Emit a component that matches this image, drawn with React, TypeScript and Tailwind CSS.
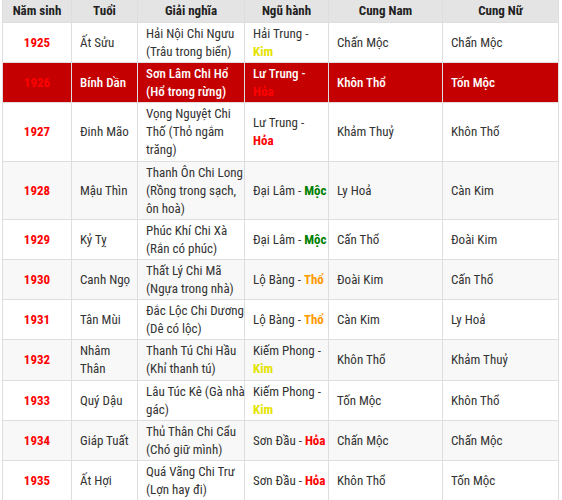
import React from "react";

type Elem = { name: string; color: string };
type Row = {
  year: string;
  tuoi: React.ReactNode;
  giai: string[];
  nh: string;
  el: Elem;
  nhBreak: boolean;
  nam: string;
  nu: string;
};

const KIM = { name: "Kim", color: "text-[#e3e300]" };
const HOA = { name: "Hỏa", color: "text-[#ff0000]" };
const MOC = { name: "Mộc", color: "text-[#008000]" };
const THO = { name: "Thổ", color: "text-[#ff9900]" };

const rows: Row[] = [
  { year: "1925", tuoi: "Ất Sửu", giai: ["Hải Nội Chi Ngưu", "(Trâu trong biển)"], nh: "Hải Trung -", el: KIM, nhBreak: true, nam: "Chấn Mộc", nu: "Chấn Mộc" },
  { year: "1926", tuoi: "Bính Dần", giai: ["Sơn Lâm Chi Hổ", "(Hổ trong rừng)"], nh: "Lư Trung -", el: HOA, nhBreak: true, nam: "Khôn Thổ", nu: "Tốn Mộc" },
  { year: "1927", tuoi: "Đinh Mão", giai: ["Vọng Nguyệt Chi", "Thố (Thỏ ngắm", "trăng)"], nh: "Lư Trung -", el: HOA, nhBreak: true, nam: "Khảm Thuỷ", nu: "Khôn Thổ" },
  { year: "1928", tuoi: "Mậu Thìn", giai: ["Thanh Ôn Chi Long", "(Rồng trong sạch,", "ôn hoà)"], nh: "Đại Lâm -", el: MOC, nhBreak: false, nam: "Ly Hoả", nu: "Càn Kim" },
  { year: "1929", tuoi: "Kỷ Tỵ", giai: ["Phúc Khí Chi Xà", "(Rắn có phúc)"], nh: "Đại Lâm -", el: MOC, nhBreak: false, nam: "Cấn Thổ", nu: "Đoài Kim" },
  { year: "1930", tuoi: "Canh Ngọ", giai: ["Thất Lý Chi Mã", "(Ngựa trong nhà)"], nh: "Lộ Bàng -", el: THO, nhBreak: false, nam: "Đoài Kim", nu: "Cấn Thổ" },
  { year: "1931", tuoi: "Tân Mùi", giai: ["Đắc Lộc Chi Dương", "(Dê có lộc)"], nh: "Lộ Bàng -", el: THO, nhBreak: false, nam: "Càn Kim", nu: "Ly Hoả" },
  { year: "1932", tuoi: <>Nhâm<br />Thân</>, giai: ["Thanh Tú Chi Hầu", "(Khỉ thanh tú)"], nh: "Kiếm Phong -", el: KIM, nhBreak: true, nam: "Khôn Thổ", nu: "Khảm Thuỷ" },
  { year: "1933", tuoi: "Quý Dậu", giai: ["Lâu Túc Kê (Gà nhà", "gác)"], nh: "Kiếm Phong -", el: KIM, nhBreak: true, nam: "Tốn Mộc", nu: "Khôn Thổ" },
  { year: "1934", tuoi: "Giáp Tuất", giai: ["Thủ Thân Chi Cẩu", "(Chó giữ mình)"], nh: "Sơn Đầu -", el: HOA, nhBreak: false, nam: "Chấn Mộc", nu: "Chấn Mộc" },
  { year: "1935", tuoi: "Ất Hợi", giai: ["Quá Vãng Chi Trư", "(Lợn hay đi)"], nh: "Sơn Đầu -", el: HOA, nhBreak: false, nam: "Khôn Thổ", nu: "Tốn Mộc" },
];

const cell = "border border-[#dedede] px-[8px] pt-[2px] pb-[1.2px] align-middle whitespace-nowrap";
const hcell = "border border-[#dedede] border-t-0 px-[8px] pt-[2px] pb-[2px] align-middle whitespace-nowrap text-center";

export default function App() {
  return (
    <div
      className="w-[562px] h-[500px] overflow-hidden bg-white pl-[2px] text-[13px] leading-[18px] text-[#333]"
      style={{ fontFamily: '"Roboto Condensed", "Liberation Sans Narrow", Roboto, sans-serif' }}
    >
      <table className="w-[556px] table-fixed border-collapse">
        <colgroup>
          <col className="w-[69px]" />
          <col className="w-[66px]" />
          <col className="w-[107px]" />
          <col className="w-[84px]" />
          <col className="w-[114px]" />
          <col className="w-[116px]" />
        </colgroup>
        <thead>
          <tr className="bg-[#e4e4e4] text-[#222] font-bold">
            <th className={hcell}>Năm sinh</th>
            <th className={hcell}>Tuổi</th>
            <th className={hcell}>Giải nghĩa</th>
            <th className={hcell}>Ngũ hành</th>
            <th className={hcell}>Cung Nam</th>
            <th className={hcell}>Cung Nữ</th>
          </tr>
        </thead>
        <tbody>
          {rows.map((r, i) => {
            const hl = r.year === "1926";
            const bg = hl ? "bg-[#c40000] text-white font-medium" : i % 2 === 1 ? "bg-[#f8f8f8]" : "bg-white";
            return (
              <tr key={r.year} className={bg}>
                <td className={cell + " text-center font-bold text-[#ff0000]"}>{r.year}</td>
                <td className={cell}>{r.tuoi}</td>
                <td className={cell}>
                  {r.giai.map((g, j) => (
                    <React.Fragment key={j}>
                      {j > 0 && <br />}
                      {g}
                    </React.Fragment>
                  ))}
                </td>
                <td className={cell}>
                  {r.nh}
                  {r.nhBreak ? <br /> : " "}
                  <span className={"font-bold " + r.el.color}>{r.el.name}</span>
                </td>
                <td className={cell}>{r.nam}</td>
                <td className={cell}>{r.nu}</td>
              </tr>
            );
          })}
        </tbody>
      </table>
    </div>
  );
}
